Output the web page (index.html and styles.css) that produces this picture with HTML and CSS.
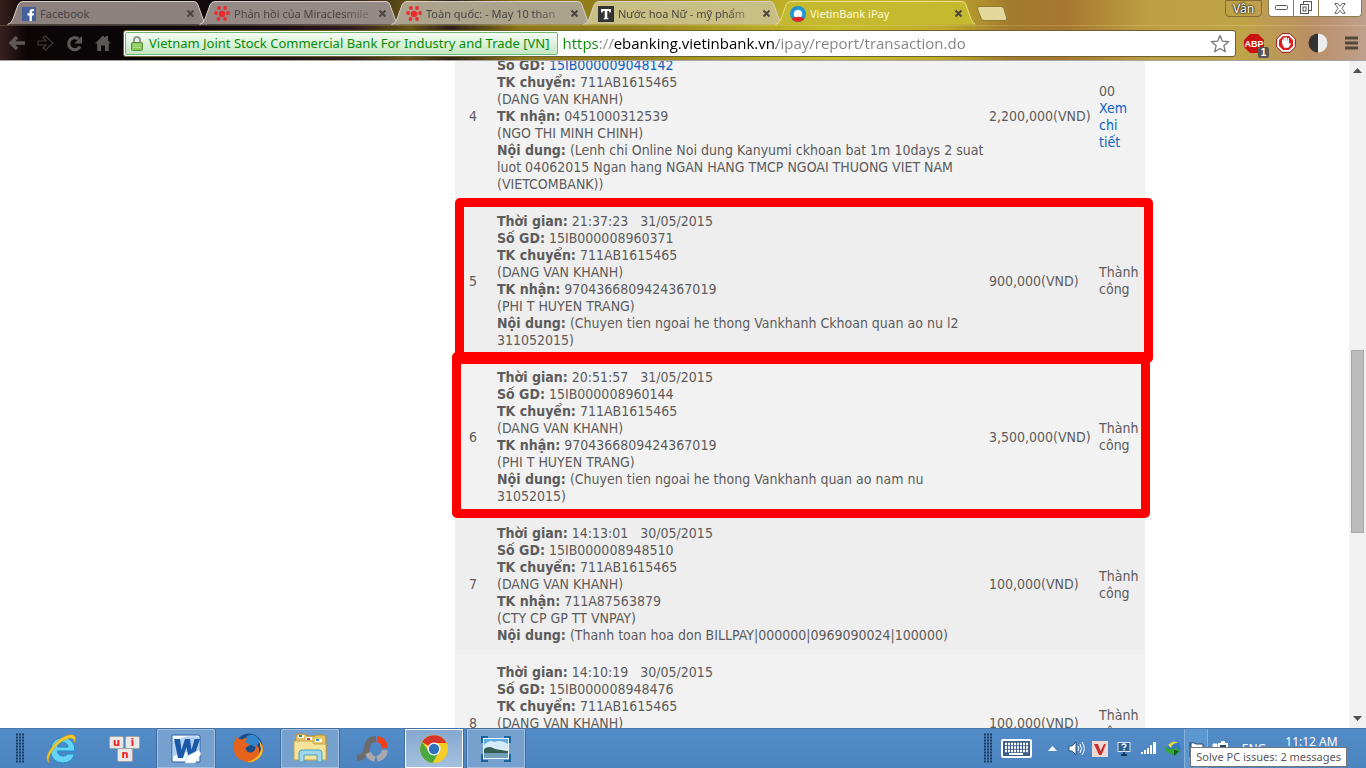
FILE: index.html
```html
<!DOCTYPE html>
<html lang="vi">
<head>
<meta charset="utf-8">
<title>VietinBank iPay</title>
<link rel="stylesheet" href="styles.css">
</head>
<body>
<svg class="defs" aria-hidden="true">
  <defs>
    <path id="tab-shape" d="M0.500 24.500 Q4 24 6 19 L11 5 Q12.500 1.500 16 1.500 H187 Q190 1.500 191 5 L196 19 Q198 24 200.500 24.500"/>
    <g id="cross"><path d="M1.500 1.500l6 6M7.500 1.500l-6 6" stroke="#4b4644" stroke-width="2"/></g>
    <g id="cluster" fill="#ed2a2c"><circle cx="8" cy="8" r="3.200"/><circle cx="5" cy="2" r="1.900"/><circle cx="11" cy="2" r="1.900"/><circle cx="14" cy="7" r="1.900"/><circle cx="2" cy="7" r="1.900"/><circle cx="4.500" cy="13" r="1.900"/><circle cx="11" cy="13" r="1.900"/></g>
    <g id="grip"><path d="M1 1.500h8M1 4.500h8M1 7.500h8M1 10.500h8M1 13.500h8M1 16.500h8M1 19.500h8M1 22.500h8M1 25.500h8M1 28.500h8" stroke="#1b3c62" stroke-width="2" stroke-dasharray="2 1"/></g>
  </defs>
</svg>
<div class="screen">
  <header class="browser">
    <div class="titlebar">
      <div class="tabs">
        <div class="tab tab-a">
          <svg class="tab-bg" viewBox="0 0 200 25" width="200" height="25"><use href="#tab-shape"/></svg>
          <svg width="14" height="14" viewBox="0 0 14 14"><rect width="14" height="14" fill="#45619d"/><path d="M7.500 14V8.500H5.500V6.300h2V4.700Q7.500 2 10.300 2H12v2.200h-1.200q-.9 0-.9.900v1.200H12l-.3 2.200H9.900V14z" fill="#fff"/></svg>
          <button class="tab-name">Facebook</button>
          <button class="tab-close" aria-label="Close"><svg width="9" height="9"><use href="#cross"/></svg></button>
        </div>
        <div class="tab tab-b">
          <svg class="tab-bg" viewBox="0 0 200 25" width="200" height="25"><use href="#tab-shape"/></svg>
          <svg width="16" height="15" viewBox="0 0 16 15"><use href="#cluster"/></svg>
          <button class="tab-name fade">Phản hồi của Miraclesmile</button>
          <button class="tab-close" aria-label="Close"><svg width="9" height="9"><use href="#cross"/></svg></button>
        </div>
        <div class="tab tab-c">
          <svg class="tab-bg" viewBox="0 0 200 25" width="200" height="25"><use href="#tab-shape"/></svg>
          <svg width="16" height="15" viewBox="0 0 16 15"><use href="#cluster"/></svg>
          <button class="tab-name fade">Toàn quốc: - May 10 than</button>
          <button class="tab-close" aria-label="Close"><svg width="9" height="9"><use href="#cross"/></svg></button>
        </div>
        <div class="tab tab-d">
          <svg class="tab-bg" viewBox="0 0 200 25" width="200" height="25"><use href="#tab-shape"/></svg>
          <svg width="16" height="16" viewBox="0 0 16 16"><rect width="16" height="16" fill="#333"/><path d="M3 3h10v3.500h-1.500L11 5H9.300v7l1.200.4v.9h-5v-.9l1.200-.4V5H5l-.5 1.500H3z" fill="#fff"/></svg>
          <button class="tab-name fade">Nước hoa Nữ - mỹ phẩm</button>
          <button class="tab-close" aria-label="Close"><svg width="9" height="9"><use href="#cross"/></svg></button>
        </div>
        <div class="tab tab-active">
          <svg class="tab-bg" viewBox="0 0 200 25" width="200" height="25"><use href="#tab-shape"/></svg>
          <svg width="16" height="16" viewBox="0 0 16 16"><circle cx="8" cy="8" r="8" fill="#1e96d4"/><path d="M1.500 12.500q6.500-3 13 0A8 8 0 0 1 1.500 12.500z" fill="#df2323"/><circle cx="8" cy="8" r="4.300" fill="#fff"/><path d="M3.500 12q4.500-2.500 9 0v1h-9z" fill="#df2323"/></svg>
          <button class="tab-name">VietinBank iPay</button>
          <button class="tab-close" aria-label="Close"><svg width="9" height="9"><use href="#cross"/></svg></button>
        </div>
        <button class="new-tab" aria-label="New tab"><svg width="32" height="17" viewBox="0 0 32 17"><path d="M3 1.500h22q2 0 2.800 2l2.700 9q.8 3-1.500 3H8q-2 0-2.800-2L1.500 4q-.5-2.500 1.500-2.500z" fill="#e3d79c" stroke="#8e7b32"/></svg></button>
      </div>
      <button class="profile">Vân</button>
      <div class="window-buttons">
        <button aria-label="Minimize"><svg width="13" height="6"><rect x=".5" y=".5" width="12" height="4" rx="1" fill="#fff" stroke="#555"/></svg></button>
        <button aria-label="Restore"><svg width="14" height="14" viewBox="0 0 14 14" fill="#fff" stroke="#555"><rect x="4.500" y=".5" width="8" height="9"/><rect x="1.500" y="3.500" width="8" height="9"/><rect x="4" y="6" width="3" height="4"/></svg></button>
        <button class="wide" aria-label="Close window"><svg width="12" height="11" viewBox="0 0 12 11"><path d="M.8.5h3L6 3.200 8.200.5h3L8 5.300l3.200 5h-3L6 7.400l-2.200 2.900h-3L4 5.300z" fill="#fff" stroke="#666"/></svg></button>
      </div>
    </div>
    <div class="toolbar">
      <nav class="nav">
        <button aria-label="Back"><svg width="18" height="16" viewBox="0 0 18 16"><path d="M9 2L3 8l6 6M3 8h14" fill="none" stroke="#5c5857" stroke-width="3.500"/></svg></button>
        <button aria-label="Forward"><svg width="18" height="16" viewBox="0 0 18 16"><path d="M1 6h8L6 2.500 8.500 1 16 8l-7.500 7L6 13l3-3H1z" fill="none" stroke="#403b3c" stroke-width="1.200"/></svg></button>
        <button aria-label="Reload"><svg width="18" height="17" viewBox="0 0 18 17"><path d="M14 11.500A6 6 0 1 1 12.500 4" fill="none" stroke="#5c5857" stroke-width="3.200"/><path d="M16 1v7.500H8.500z" fill="#5c5857"/></svg></button>
        <button aria-label="Home"><svg width="16" height="16" viewBox="0 0 16 16"><path d="M0 8.500L8 .5l2.500 2.600V1H13v4.600l3 2.900h-2.200V16H10v-5.500H6V16H2.200V8.500z" fill="#5c5857"/></svg></button>
      </nav>
      <div class="omnibox">
        <button class="security"><svg width="12" height="15" viewBox="0 0 12 15"><path d="M3 7V4q0-3 3-3t3 3v3" fill="none" stroke="#999" stroke-width="2"/><rect x=".5" y="6.500" width="11" height="8" rx="1" fill="#87c95a" stroke="#57893a"/><path d="M2 9h8M2 11.500h8" stroke="#b5e08f"/></svg><span>Vietnam Joint Stock Commercial Bank For Industry and Trade [VN]</span></button>
        <input class="url" type="text" aria-label="Address" value="https://ebanking.vietinbank.vn/ipay/report/transaction.do">
        <button class="star" aria-label="Bookmark"><svg width="20" height="19" viewBox="0 0 20 19"><path d="M10 1.500l2.400 5.700 6.100.5-4.700 4 1.500 6L10 14.500l-5.300 3.200 1.500-6-4.700-4 6.100-.5z" fill="#fff" stroke="#777" stroke-width="1.300" stroke-linejoin="round"/></svg></button>
      </div>
      <div class="extensions">
        <button aria-label="Adblock Plus"><svg width="25" height="25" viewBox="0 0 25 25"><path d="M6 1h8l6 6v7l-6 6H6l-6-6V7z" fill="#cb1010"/><text class="abp" x="10" y="14" text-anchor="middle">ABP</text><rect x="14" y="14" width="11" height="11" rx="2" fill="#555"/><text class="count" x="19.500" y="23" text-anchor="middle">1</text></svg></button>
        <button aria-label="Adblock"><svg width="20" height="20" viewBox="0 0 20 20"><path d="M6 .7h8L19.300 6v8L14 19.300H6L.7 14V6z" fill="#fff" stroke="#8d1616"/><path d="M7 3h6l4 4v6l-4 4H7l-4-4V7z" fill="#d81f1f"/><path d="M6 10V6.500h1.300V9l.4-4.500H9V9l.5-5h1.300l.3 5 .6-4H13v6l1-1 1 .8-2.500 4H8z" fill="#fff"/></svg></button>
        <button aria-label="Contrast"><svg width="20" height="20" viewBox="0 0 20 20"><path d="M10 .5a9.500 9.500 0 0 0 0 19z" fill="#333"/><path d="M10 .5a9.500 9.500 0 0 1 0 19z" fill="#ececec"/></svg></button>
        <button aria-label="Menu"><svg width="13" height="14" viewBox="0 0 13 14"><path d="M0 2h13M0 7h13M0 12h13" stroke="#54483a" stroke-width="3"/></svg></button>
      </div>
    </div>
  </header>

  <div class="viewport">
    <main class="page">
      <div class="history">
        <table>
          <colgroup><col class="c-no"><col><col class="c-amount"><col class="c-status"></colgroup>
          <tbody>
            <tr>
              <td class="no">4</td>
              <td><br><b>Số GD:</b> <a href="#gd">15IB000009048142</a><br><b>TK chuyển:</b> 711AB1615465<br>(DANG VAN KHANH)<br><b>TK nhận:</b> 0451000312539<br>(NGO THI MINH CHINH)<br><b>Nội dung:</b> (Lenh chi Online Noi dung Kanyumi ckhoan bat 1m 10days 2 suat<br>luot 04062015 Ngan hang NGAN HANG TMCP NGOAI THUONG VIET NAM<br>(VIETCOMBANK))</td>
              <td>2,200,000(VND)</td>
              <td>00<br><a href="#chi-tiet">Xem<br>chi<br>tiết</a></td>
            </tr>
            <tr>
              <td class="no">5</td>
              <td><b>Thời gian:</b> 21:37:23 &nbsp; 31/05/2015<br><b>Số GD:</b> 15IB000008960371<br><b>TK chuyển:</b> 711AB1615465<br>(DANG VAN KHANH)<br><b>TK nhận:</b> 9704366809424367019<br>(PHI T HUYEN TRANG)<br><b>Nội dung:</b> (Chuyen tien ngoai he thong Vankhanh Ckhoan quan ao nu l2<br>311052015)</td>
              <td>900,000(VND)</td>
              <td>Thành<br>công</td>
            </tr>
            <tr>
              <td class="no">6</td>
              <td><b>Thời gian:</b> 20:51:57 &nbsp; 31/05/2015<br><b>Số GD:</b> 15IB000008960144<br><b>TK chuyển:</b> 711AB1615465<br>(DANG VAN KHANH)<br><b>TK nhận:</b> 9704366809424367019<br>(PHI T HUYEN TRANG)<br><b>Nội dung:</b> (Chuyen tien ngoai he thong Vankhanh quan ao nam nu<br>31052015)</td>
              <td>3,500,000(VND)</td>
              <td>Thành<br>công</td>
            </tr>
            <tr>
              <td class="no">7</td>
              <td><b>Thời gian:</b> 14:13:01 &nbsp; 30/05/2015<br><b>Số GD:</b> 15IB000008948510<br><b>TK chuyển:</b> 711AB1615465<br>(DANG VAN KHANH)<br><b>TK nhận:</b> 711A87563879<br>(CTY CP GP TT VNPAY)<br><b>Nội dung:</b> (Thanh toan hoa don BILLPAY|000000|0969090024|100000)</td>
              <td>100,000(VND)</td>
              <td>Thành<br>công</td>
            </tr>
            <tr>
              <td class="no">8</td>
              <td><b>Thời gian:</b> 14:10:19 &nbsp; 30/05/2015<br><b>Số GD:</b> 15IB000008948476<br><b>TK chuyển:</b> 711AB1615465<br>(DANG VAN KHANH)<br><br><br><br></td>
              <td>100,000(VND)</td>
              <td>Thành<br>công</td>
            </tr>
          </tbody>
        </table>
        <div class="mark mark-first"></div>
        <div class="mark mark-second"></div>
      </div>
    </main>
    <div class="scrollbar">
      <svg width="9" height="5"><path d="M0 5L4.500 0 9 5z" fill="#505050"/></svg>
      <div class="track"><div class="thumb"></div></div>
      <svg width="9" height="5"><path d="M0 0h9L4.500 5z" fill="#505050"/></svg>
    </div>
  </div>

  <footer class="taskbar">
    <svg class="grip" width="9" height="31"><use href="#grip"/></svg>
    <div class="apps">
      <button aria-label="Internet Explorer"><svg width="32" height="32" viewBox="0 0 32 32"><path d="M29 18H11.500q.5 5 5.500 5 3 0 4.500-2H28.500Q26 30 16.500 30 5 29 4.500 17.500 5.500 5 17 4.500 29 5.500 29 18zM11.500 14H22q-.5-4.500-5-4.500T11.500 14z" fill="#66d3f6" stroke="#1d8ccb"/><path d="M3.500 30Q-2 27 4 17 11 6 21 2.500q8-2.500 8.500 3 0 2-1.500 4 .5-5-4-4.500Q16 6.500 9 14 0 25 3.500 30z" fill="#f7cc2c" stroke="#d79a10" stroke-width=".6"/></svg></button>
      <button aria-label="UniKey"><svg width="31" height="26" viewBox="0 0 31 26"><g fill="#e8e8e8" stroke="#a3a3a3"><rect x=".5" y=".5" width="14" height="12" rx="1.500"/><rect x="16.500" y=".5" width="14" height="12" rx="1.500"/><rect x="8.500" y="12.500" width="15" height="13" rx="1.500"/></g><g class="keys"><text x="7.500" y="9.500">u</text><text x="23.500" y="9.500">i</text><text x="16" y="21.500">n</text></g></svg></button>
      <button class="open" aria-label="Word"><svg width="32" height="32" viewBox="0 0 32 32"><path d="M2 2h26q2 0 2 2v25H2z" fill="#f3f8fd" stroke="#2c5fa8"/><path d="M2 9q14-8 28-5v17q-13-5-28 3z" fill="#8db9e8" opacity=".65"/><path d="M5 6h6l1.500 11L16 6h5l1.500 11L25.500 6H31l-6.500 19h-5L17.500 14 14 25H9z" fill="#1b58a8" transform="translate(-1)"/><path d="M17 23l12-6 2 4-6 9H15z" fill="#fff" stroke="#b2c6dc" stroke-width=".6"/></svg></button>
      <button aria-label="Firefox"><svg width="31" height="31" viewBox="0 0 31 31"><circle cx="16" cy="14" r="13.500" fill="#174c8d"/><path d="M14 3q8-4 13 5l-4 6-5-2-4 1-4-4z" fill="#3486c8"/><path d="M4 4q1 2 5 2.500Q13 4 14 6l-2.500 3.500q5 1 5 2.500l-4 3q1 5 6 4.500 5-2 4-8 5 3 3 9 3-2 4-10 2 10-4 15-7 7-16 2Q1 25 1 16 0 8 4 4z" fill="#e5641d"/><path d="M26 7q7 10 1 17-6 6-13 5 12-3 14-13z" fill="#f6bb24"/></svg></button>
      <button class="open" aria-label="File Explorer"><svg width="34" height="31" viewBox="0 0 34 31"><path d="M3 3q0-2 2-2h7l2 2h8q1-1 3-1h6q2 0 2 2v22H2z" fill="#e6c664" stroke="#b58e30"/><path d="M5 2h6v3H5zM13 4h6v3h-6zM22 6h7v3h-7z" fill="#fff"/><path d="M6 2h3v2H6z" fill="#21a63a"/><path d="M14 5h3v2h-3z" fill="#d53b28"/><path d="M23 6h3v2h-3z" fill="#348edb"/><path d="M1 8h18l2 3h12v16H1z" fill="#f7e49c" stroke="#c5a44b"/><path d="M6 29V20q0-3 3-3h17q3 0 3 3v9h-5v-7H11v7z" fill="#9ed7ec" stroke="#4b9ebe"/></svg></button>
      <button aria-label="PhotoScape"><svg width="32" height="28" viewBox="0 0 32 28" fill="none" stroke-width="6"><path d="M20 4q-8 0-9 9-1 9-10 10" stroke="#6c6a6c"/><path d="M21 4q7 1 8 9" stroke="#f23e19"/><path d="M29 15q-1 7-8 9M19 24q-5-1-7-6" stroke="#a9a8ad"/></svg></button>
      <button class="open current" aria-label="Chrome"><svg width="28" height="28" viewBox="0 0 28 28"><circle cx="14" cy="14" r="14" fill="#f5cc27"/><path d="M14 14L2 7A14 14 0 0 1 26.500 8H14z" fill="#d8352b"/><path d="M2 7A14 14 0 0 0 12.500 28L19 17l-5-3-5 3z" fill="#4aa843"/><circle cx="14" cy="14" r="6.500" fill="#fff"/><circle cx="14" cy="14" r="5.200" fill="#2f72bb"/></svg></button>
      <button class="open" aria-label="Photo Viewer"><svg width="30" height="26" viewBox="0 0 30 26"><rect x="2" y="2" width="26" height="21" fill="#eef7fd"/><path d="M3 3h24v9H3z" fill="#5eaae3"/><path d="M3 9q6-6 10-3 7-3 14 2v5H3z" fill="#d5ecf8"/><path d="M3 13q5-4 11 0l13 2v3H3z" fill="#325f52"/><path d="M3 17h24v5H3z" fill="#739fb8"/><path d="M1 7V1h6M23 1h6v6M29 18v7h-6M7 25H1v-7" fill="none" stroke="#1a659f" stroke-width="2"/></svg></button>
    </div>
    <div class="tray">
      <svg class="grip" width="9" height="31"><use href="#grip"/></svg>
      <button class="keyboard" aria-label="Touch keyboard"><svg width="31" height="19" viewBox="0 0 31 19"><rect x="1" y="1" width="29" height="17" rx="1" fill="#3b5f88" stroke="#fff" stroke-width="2"/><path d="M4 5h23M4 8.500h23M4 12h23" stroke="#fff" stroke-width="2.500" stroke-dasharray="2 1"/><path d="M8 15h14" stroke="#fff" stroke-width="2"/></svg></button>
      <button aria-label="Show hidden icons"><svg width="9" height="5"><path d="M0 5L4.500 0 9 5z" fill="#fff"/></svg></button>
      <button aria-label="Volume"><svg width="17" height="15" viewBox="0 0 17 15"><path d="M1 5h3l4-4v13l-4-4H1z" fill="#fff" stroke="#2c557f"/><path d="M10 5q1.500 2.500 0 5M12 3q3 4.500 0 9M14 1q4.500 6.500 0 13" fill="none" stroke="#fff"/></svg></button>
      <button aria-label="Vietnamese input"><svg width="16" height="16" viewBox="0 0 16 16"><rect width="16" height="16" fill="#f2d8d5"/><path d="M2 3h4l2.500 7L12 3h2L9.500 14H7z" fill="#c9302c"/></svg></button>
      <button aria-label="Display help"><svg width="14" height="14" viewBox="0 0 14 14"><rect x="1" y=".5" width="12" height="9" fill="#2e6295" stroke="#d7e4f0"/><path d="M5 3.500q0-1.500 2-1.500t2 1.500Q9 5 7 5.500V6M7 7v1.500" fill="none" stroke="#fff" stroke-width="1.300"/><path d="M4 13h6M7 10v3" stroke="#173a63" stroke-width="2"/></svg></button>
      <button aria-label="Network"><svg width="17" height="13" viewBox="0 0 17 13" fill="#fff"><path d="M1 10h2v2H1zM4 8h2v4H4zM7 6h2v6H7zM10 3h2v9h-2zM13 0h3v12h-3z"/></svg></button>
      <button aria-label="Internet Download Manager"><svg width="17" height="16" viewBox="0 0 17 16"><circle cx="10" cy="7" r="6.500" fill="#3677c5"/><path d="M4 4q5-6 10-2-6 0-7 5z" fill="#e3dc44"/><path d="M0 5l5 3h6V5l5 5-5 5v-2H8Q2 13 0 5z" fill="#35a934"/><path d="M10 9l5 1-5 5z" fill="#0f5c18"/></svg></button>
      <button class="hot" aria-label="Action Center"><svg width="15" height="16" viewBox="0 0 15 16"><path d="M1 1v15M2 2q3-1 5 1h7v7H7q-2-2-5-1z" fill="#fff" stroke="#21456e"/></svg></button>
      <button aria-label="Power"><svg width="16" height="16" viewBox="0 0 16 16"><path d="M1 3v4q0 2 2 2v5M1 3h4v4q0 2-2 2" fill="#fff" stroke="#fff"/><rect x="7" y="3" width="8" height="12" fill="#24486f" stroke="#fff" stroke-width="2"/><path d="M9 1h4" stroke="#fff" stroke-width="2"/></svg></button>
      <button class="lang">ENG</button>
      <button class="clock">11:12 AM</button>
    </div>
    <div class="tooltip" role="tooltip">Solve PC issues: 2 messages</div>
  </footer>
</div>
</body>
</html>
```
FILE: styles.css
```css
* { box-sizing: border-box; }
body { margin: 0; font-family: "Noto Sans", "Open Sans", sans-serif; }
button { margin: 0; padding: 0; border: 0; background: none; font: inherit; color: inherit; display: flex; align-items: center; justify-content: center; }
svg { display: block; flex: none; }
.defs { position: absolute; width: 0; height: 0; }
.screen { display: flex; flex-direction: column; height: 100vh; overflow: hidden; }

/* Browser frame */
.browser {
  flex: none;
  border-bottom: 1px solid #a9a6a2;
  background: linear-gradient(90deg, #38201f 0, #0b0506 2%, #0a0607 9%, #170b10 20%, #33201c 26%, #665316 30%, #2c2217 33%, #8e7717 38%, #93801d 46%, #b2a323 54%, #c8bd2a 61%, #beab2c 69%, #a37a2e 74%, #a8772f 78%, #bd9f43 84%, #bfa348 91%, #b98f65 96%, #bea08d 100%);
}
.titlebar { display: flex; align-items: flex-start; height: 25px; }
.tabs { display: flex; flex: 1; padding-left: 7px; min-width: 0; }
.tab { position: relative; display: flex; align-items: center; flex: none; width: 200px; height: 25px; margin-right: -8px; padding: 2px 8px 0 15px; gap: 4px; font-size: 11px; color: #4a4543; }
.tab > * { position: relative; }
.tab .tab-bg { position: absolute; inset: 0; stroke: #d8d0c8; stroke-width: 1; }
.tab-a { fill: #8c817f; }
.tab-b { fill: #958a86; }
.tab-c { fill: #aba38b; }
.tab-d { fill: #c9bf84; }
.tab-active { z-index: 1; color: #fff9d8; }
.tab-active .tab-bg { fill: #c5b930; stroke: #ece08a; }
.tab-name { flex: 1; min-width: 0; justify-content: flex-start; overflow: hidden; white-space: nowrap; height: 20px; }
.fade { mask-image: linear-gradient(90deg, #000 80%, rgba(0, 0, 0, .3)); }
.tab-close { width: 17px; height: 17px; }
.new-tab { margin: 5px 0 0 9px; height: 17px; }
.profile { width: 37px; height: 17px; margin-right: 6px; border: 1px solid #846c32; border-radius: 0 0 4px 4px; color: #fff; font-size: 12px; text-shadow: 0 0 2px #000, 0 0 2px #000; }
.window-buttons { display: flex; height: 17px; margin-right: 4px; border: 1px solid #8f7a53; border-top: 0; border-radius: 0 0 4px 4px; background: #fff; }
.window-buttons button { width: 25px; height: 16px; border-right: 1px solid #8f7a53; }
.window-buttons .wide { width: 42px; border: 0; }

.toolbar { display: flex; align-items: center; height: 35px; padding: 0 8px; border-top: 1px solid rgba(255, 240, 180, .2); }
.nav { display: flex; gap: 11px; width: 115px; }
.omnibox { display: flex; align-items: center; flex: 1; min-width: 0; height: 27px; padding: 1px; border: 1px solid #6d6131; border-radius: 3px; background: #fff; }
.security { flex: none; height: 23px; gap: 6px; padding: 0 8px 0 5px; border: 1px solid #74b474; border-radius: 2px; background: linear-gradient(#f4fcf3, #c3e8c1); color: #078b07; font-size: 13px; white-space: nowrap; }
.url {
  flex: 1; min-width: 0; height: 23px; padding: 0 4px; border: 0; outline: 0; font: 15px "Open Sans", "Noto Sans", sans-serif;
  color: transparent;
  background: linear-gradient(90deg, #078b07 0 40px, #888 40px 55px, #000 55px 218px, #808080 218px);
  background-clip: text;
  -webkit-background-clip: text;
}
.star { width: 28px; height: 23px; }
.extensions { display: flex; align-items: center; padding-left: 8px; gap: 12px; }
.extensions button:first-child { padding-top: 4px; margin-right: -5px; }
.extensions button:last-child { margin-left: 5px; }
.abp { font: bold 9px "Liberation Sans", sans-serif; fill: #fff; }
.count { font: bold 10px "Liberation Sans", sans-serif; fill: #fff; }

/* Page */
.viewport { display: flex; flex: 1; min-height: 0; background: #fff; }
.page { flex: 1; min-width: 0; padding-left: 251px; overflow: hidden; }
.history { position: relative; width: 690px; margin: -31px auto 0; }
.history table { width: 100%; border-collapse: collapse; table-layout: fixed; font: 14px/17px "DejaVu Sans Condensed", "Noto Sans", sans-serif; color: #5c5c5c; }
.c-no { width: 36px; }
.c-amount { width: 110px; }
.c-status { width: 52px; }
td { padding: 10px 0 10px 6px; vertical-align: middle; white-space: nowrap; }
td.no { padding: 10px 0; text-align: center; }
tr:nth-child(odd) { background: #f2f2f2; }
tr:nth-child(even) { background: #eee; }
td a { color: #0a62c4; text-decoration: none; }
.mark { position: absolute; width: 698px; border: 9px solid #f00; border-radius: 5px; }
.mark-first { left: 0; top: 168px; height: 165px; }
.mark-second { left: -3px; top: 322px; height: 166px; border-top-width: 12px; }
.scrollbar { display: flex; flex-direction: column; align-items: center; flex: none; width: 17px; padding: 7px 0; background: #f1f1f1; }
.track { flex: 1; width: 13px; padding-top: 277px; }
.thumb { height: 183px; border: 1px solid #a8a8a8; background: #bcbcbc; }

/* Taskbar */
.taskbar { position: relative; display: flex; align-items: center; flex: none; height: 40px; padding-left: 15px; background: linear-gradient(#548cc8, #4b84c0); border-top: 1px solid #4a7bb0; color: #fff; }
.apps { display: flex; flex: 1; gap: 4px; padding-left: 9px; }
.apps button { width: 58px; height: 39px; border: 1px solid transparent; }
.apps .open { background: #76a1cf; border-color: #a0bedf; outline: 1px solid #426f9f; outline-offset: 0; }
.apps .current { background: linear-gradient(#86a9cf, #a5c0de); border-color: #fff; }
.keys { font: bold 10px "DejaVu Sans", sans-serif; fill: #f01818; text-anchor: middle; }
.tray { display: flex; align-items: center; font-size: 12px; }
.tray button { width: 24px; height: 39px; }
.tray .keyboard { width: 48px; }
.tray .hot { background: #5d97cf; border: solid #88b2da; border-width: 0 1px; }
.tray .lang { width: 44px; }
.tray .clock { width: 71px; margin-right: 19px; align-items: flex-start; padding-top: 4px; }
.tooltip { position: absolute; right: 19px; bottom: 1px; padding: 0 5px; border: 1px solid #767676; background: #fff; color: #575757; font-size: 11px; line-height: 18px; white-space: nowrap; }
```
